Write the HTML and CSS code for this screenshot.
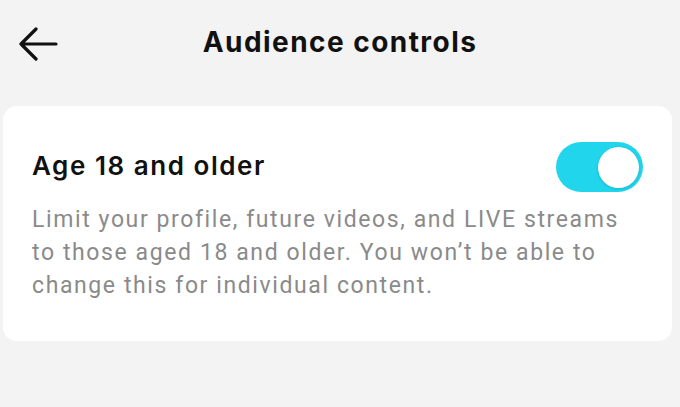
FILE: index.html
```html
<!DOCTYPE html>
<html>
<head>
<meta charset="utf-8">
<link rel="stylesheet" href="styles.css">
</head>
<body>
<header class="topbar">
  <button class="back" aria-label="Back">
    <svg width="40" height="34" viewBox="0 0 40 34"><path d="M38 17H3M18 2L3 17l15 15" fill="none" stroke="#111" stroke-width="3.2" stroke-linecap="round" stroke-linejoin="round"/></svg>
  </button>
  <h1 class="title">Audience controls</h1>
  <span class="spacer"></span>
</header>
<section class="card">
  <div class="row">
    <h2 class="label">Age 18 and older</h2>
    <span class="toggle on"><span class="knob"></span></span>
  </div>
  <p class="desc">Limit your profile, future videos, and LIVE streams to those aged 18 and older. You won’t be able to change this for individual content.</p>
</section>
</body>
</html>
```
FILE: styles.css
```css
html, body {
  margin: 0;
  padding: 0;
  background: #f3f3f3;
  font-family: Roboto, "Liberation Sans", sans-serif;
}
.topbar {
  height: 88px;
  display: grid;
  grid-template-columns: 80px 1fr 80px;
  align-items: center;
  padding-bottom: 18px;
}
.back {
  background: none;
  border: 0;
  padding: 0 0 0 18px;
  display: flex;
  align-items: center;
  height: 40px;
}
.title {
  margin: 0 0 4px;
  text-align: center;
  font-family: Inter, Roboto, sans-serif;
  font-weight: 700;
  font-size: 28px;
  line-height: 34px;
  color: #111;
  letter-spacing: 1.45px;
}
.card {
  margin: 0 8px 0 3px;
  background: #fff;
  border-radius: 14px;
  padding: 36px 29px 39px 29px;
}
.row {
  display: flex;
  align-items: center;
  justify-content: space-between;
}
.label {
  margin: 0 0 4px;
  font-family: Inter, Roboto, sans-serif;
  font-weight: 600;
  font-size: 26px;
  letter-spacing: 1.55px;
  color: #111;
}
.toggle {
  width: 87px;
  height: 50px;
  border-radius: 25px;
  background: #20d5ec;
  display: flex;
  align-items: center;
  justify-content: flex-end;
  padding: 0 4px;
  box-sizing: border-box;
}
.knob {
  width: 41px;
  height: 41px;
  border-radius: 50%;
  background: #fff;
  box-shadow: 0 1px 3px rgba(0,0,0,0.15);
}
.desc {
  margin: 11px 24px 0 0;
  font-size: 23px;
  line-height: 33px;
  letter-spacing: 1.6px;
  color: #8a8a8a;
}
```
